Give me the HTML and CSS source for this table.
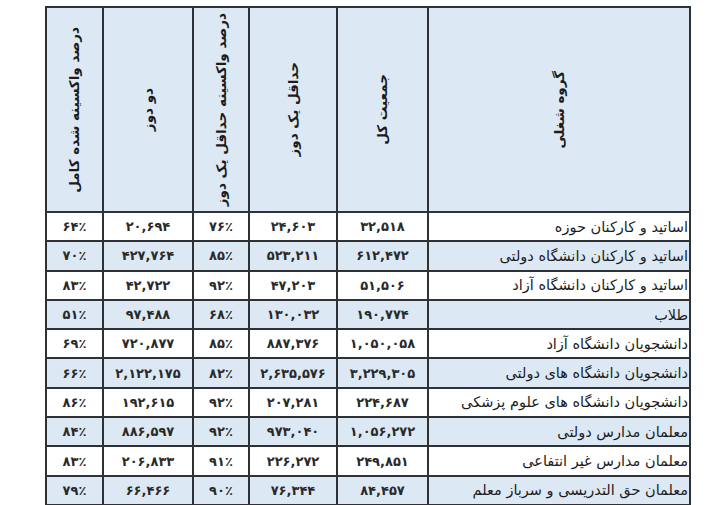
FILE: index.html
```html
<!DOCTYPE html>
<html lang="fa">
<head>
<meta charset="utf-8">
<title>جدول واکسیناسیون گروه‌های شغلی</title>
<link rel="stylesheet" href="styles.css">
</head>
<body>
<div class="page">
<table class="vax" dir="rtl">
  <colgroup>
    <col class="c-name"><col class="c-total"><col class="c-one"><col class="c-pone"><col class="c-two"><col class="c-ptwo">
  </colgroup>
  <thead>
    <tr>
      <th><div class="hcell"><span class="vt">گروه شغلی</span></div></th>
      <th><div class="hcell"><span class="vt">جمعیت کل</span></div></th>
      <th><div class="hcell"><span class="vt">حداقل یک دوز</span></div></th>
      <th><div class="hcell"><span class="vt">درصد واکسینه حداقل یک دوز</span></div></th>
      <th><div class="hcell"><span class="vt">دو دوز</span></div></th>
      <th><div class="hcell"><span class="vt">درصد واکسینه شده کامل</span></div></th>
    </tr>
  </thead>
  <tbody>
    <tr><td class="name">اساتید و کارکنان حوزه</td><td class="num">۳۲,۵۱۸</td><td class="num">۲۴,۶۰۳</td><td class="num">۷۶٪</td><td class="num">۲۰,۶۹۴</td><td class="num">۶۴٪</td></tr>
    <tr><td class="name">اساتید و کارکنان دانشگاه دولتی</td><td class="num">۶۱۲,۴۷۲</td><td class="num">۵۲۳,۲۱۱</td><td class="num">۸۵٪</td><td class="num">۴۲۷,۷۶۴</td><td class="num">۷۰٪</td></tr>
    <tr><td class="name">اساتید و کارکنان دانشگاه آزاد</td><td class="num">۵۱,۵۰۶</td><td class="num">۴۷,۲۰۳</td><td class="num">۹۲٪</td><td class="num">۴۲,۷۲۲</td><td class="num">۸۳٪</td></tr>
    <tr><td class="name">طلاب</td><td class="num">۱۹۰,۷۷۴</td><td class="num">۱۳۰,۰۳۲</td><td class="num">۶۸٪</td><td class="num">۹۷,۴۸۸</td><td class="num">۵۱٪</td></tr>
    <tr><td class="name">دانشجویان دانشگاه آزاد</td><td class="num">۱,۰۵۰,۰۵۸</td><td class="num">۸۸۷,۳۷۶</td><td class="num">۸۵٪</td><td class="num">۷۲۰,۸۷۷</td><td class="num">۶۹٪</td></tr>
    <tr><td class="name">دانشجویان دانشگاه های دولتی</td><td class="num">۳,۲۲۹,۳۰۵</td><td class="num">۲,۶۳۵,۵۷۶</td><td class="num">۸۲٪</td><td class="num">۲,۱۲۲,۱۷۵</td><td class="num">۶۶٪</td></tr>
    <tr><td class="name">دانشجویان دانشگاه های علوم پزشکی</td><td class="num">۲۲۴,۶۸۷</td><td class="num">۲۰۷,۲۸۱</td><td class="num">۹۲٪</td><td class="num">۱۹۲,۶۱۵</td><td class="num">۸۶٪</td></tr>
    <tr><td class="name">معلمان مدارس دولتی</td><td class="num">۱,۰۵۶,۲۷۲</td><td class="num">۹۷۳,۰۴۰</td><td class="num">۹۲٪</td><td class="num">۸۸۶,۵۹۷</td><td class="num">۸۴٪</td></tr>
    <tr><td class="name">معلمان مدارس غیر انتفاعی</td><td class="num">۲۴۹,۸۵۱</td><td class="num">۲۲۶,۲۷۲</td><td class="num">۹۱٪</td><td class="num">۲۰۶,۸۳۳</td><td class="num">۸۳٪</td></tr>
    <tr><td class="name">معلمان حق التدریسی و سرباز معلم</td><td class="num">۸۴,۴۵۷</td><td class="num">۷۶,۳۴۴</td><td class="num">۹۰٪</td><td class="num">۶۶,۴۶۶</td><td class="num">۷۹٪</td></tr>
  </tbody>
</table>
</div>
</body>
</html>
```

FILE: styles.css
```css
html, body {
  margin: 0;
  padding: 0;
  background: #ffffff;
}
body {
  font-family: "DejaVu Sans", "Noto Sans", sans-serif;
  color: #1c1c1c;
  overflow: hidden;
}
.page {
  padding: 6px 0 0 45px;
}
.vax {
  border-collapse: collapse;
  table-layout: fixed;
  width: 644px;
  font-size: 14px;
}
.c-name { width: 262px; }
.c-total { width: 91px; }
.c-one { width: 88px; }
.c-pone { width: 56px; }
.c-two { width: 90px; }
.c-ptwo { width: 57px; }

.vax th,
.vax td {
  border: 2px solid #2e3236;
  padding: 0;
}
.vax th {
  background: #dce9f5;
  font-weight: bold;
  vertical-align: middle;
  text-align: center;
}
.hcell {
  height: 203px;
  display: flex;
  align-items: center;
  justify-content: center;
  overflow: visible;
}
.vt {
  writing-mode: vertical-rl;
  transform: rotate(180deg);
  white-space: nowrap;
  font-size: 13.5px;
  line-height: 1.2;
}
.vax tbody tr {
  height: 29.3px;
}
.vax tbody tr:nth-child(even) td {
  background: #dce9f5;
}
.vax td.name {
  text-align: right;
  padding-right: 1px;
  font-size: 14.5px;
}
.vax td.num {
  direction: ltr;
  text-align: center;
  font-size: 13px;
  font-weight: bold;
  color: #2a2a2a;
}
```
